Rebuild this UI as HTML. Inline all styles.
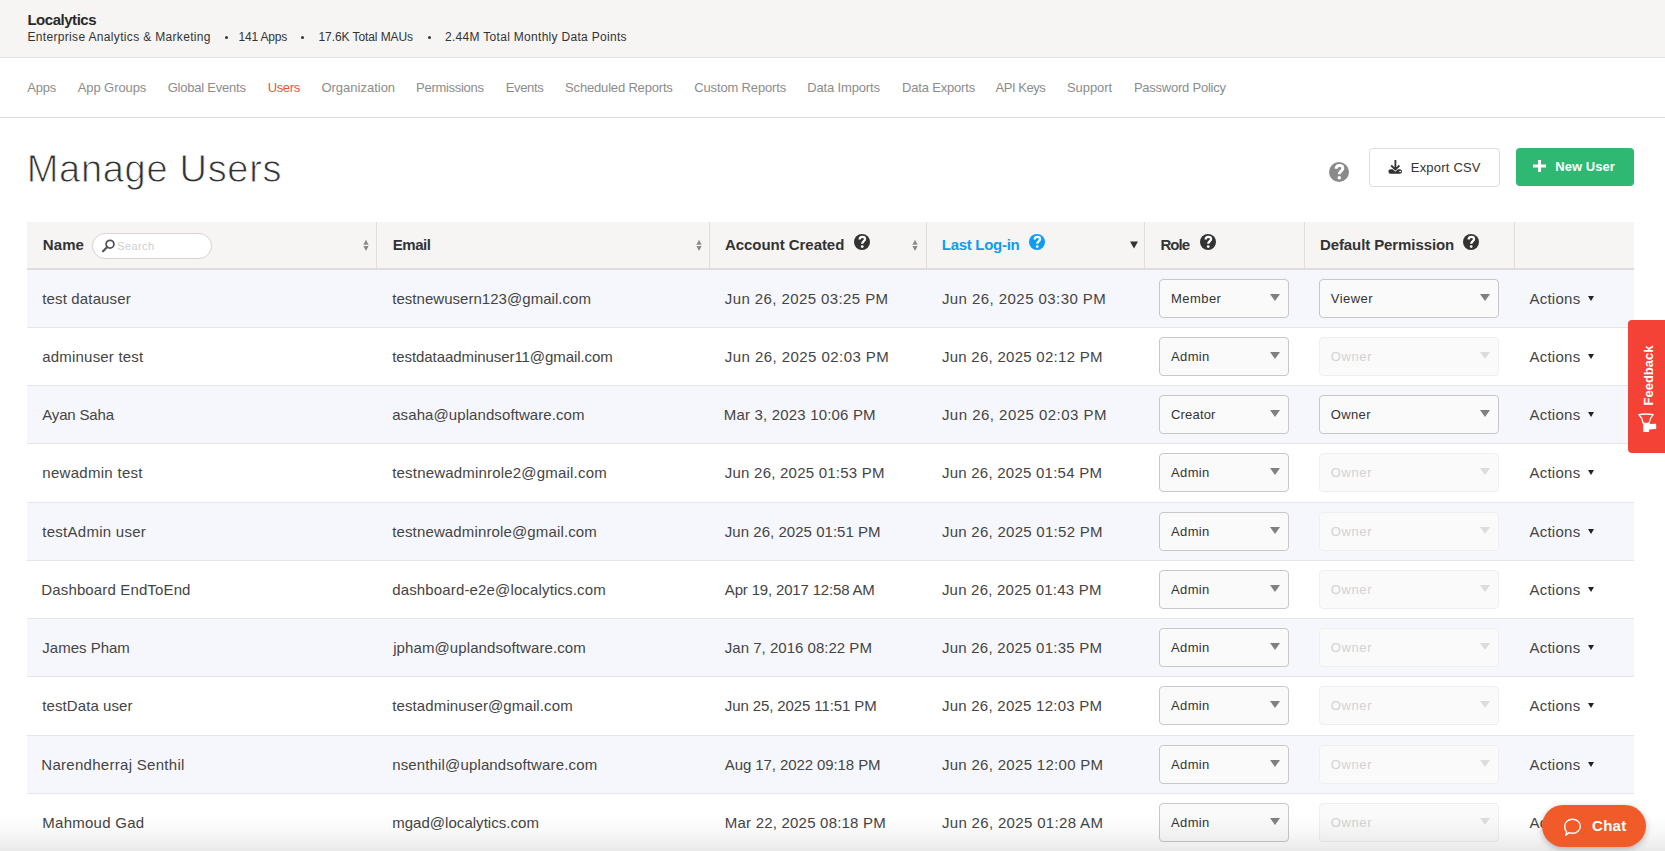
<!DOCTYPE html>
<html><head><meta charset="utf-8">
<style>
*{box-sizing:border-box;margin:0;padding:0}
html,body{width:1665px;height:851px;overflow:hidden;background:#fff;font-family:"Liberation Sans",sans-serif;color:#333}
.abs{position:absolute}
span{position:absolute;white-space:nowrap}
#hdr{position:absolute;left:0;top:0;width:1665px;height:58px;background:#f6f5f4;border-bottom:1px solid #e3e1e0}
.t{font-size:15px;font-weight:bold;color:#2a2a2a}
.s{font-size:12px;color:#333}
.d{position:absolute;top:36.3px;width:3px;height:3px;background:#333;border-radius:1.5px}
#nav{position:absolute;left:0;top:58px;width:1665px;height:60px;border-bottom:1px solid #dcdad9}
.nv{font-size:13px;color:#8c8c8c}
.nv.on{color:#e8543f}
.h1{font-size:38px;color:#333;-webkit-text-stroke:0.9px #fff}
.btn{position:absolute;border-radius:4px}
#exp{left:1369px;top:148px;width:131px;height:39px;border:1px solid #dddddd;background:#fff}
#new{left:1516px;top:148px;width:118px;height:38px;background:#2eb872}
.bt{font-size:13px;color:#333}
.bt.w{color:#fff;font-weight:bold}
#th{position:absolute;left:27px;top:222px;width:1607px;height:48px;background:#f6f5f4;border-bottom:2px solid #e0dcdd}
.vl{position:absolute;top:222px;width:1px;height:46px;background:#e2dedd}
.hb{font-size:15px;font-weight:bold;color:#333}
#srch{position:absolute;left:92px;top:233px;width:120px;height:26px;border:1px solid #d9d3d3;border-radius:13px;background:#fff}
.ph{font-size:11px;color:#cfcfcf}
.row{position:absolute;left:27px;width:1607px;border-bottom:1px solid #e8e5e9;background:#fff}
.row.alt{background:#f6f7fc}
.c{font-size:15px;color:#444}
.sel{position:absolute;height:39px;border:1px solid #c8c8c8;border-radius:4px;background:#fafafa}
.sel:after{content:"";position:absolute;right:8px;top:14px;border-left:5.5px solid transparent;border-right:5.5px solid transparent;border-top:7px solid #808080}
.sel.dis{border-color:#efefef}
.sel.dis:after{border-top-color:#dcdcdc}
.st{font-size:13px;color:#333}
.st.dis{color:#d2d2d2}
.car{position:absolute;width:0;height:0;border-left:3px solid transparent;border-right:3px solid transparent;border-top:5.5px solid #222}
#shade{position:absolute;left:0;top:816px;width:1665px;height:35px;background:linear-gradient(rgba(0,0,0,0) 0%,rgba(0,0,0,0.035) 55%,rgba(0,0,0,0.085) 100%)}
#fb{position:absolute;left:1628px;top:320px;width:40px;height:133px;background:#f44336;border-radius:4px 0 0 4px}
#chat{position:absolute;left:1542px;top:805px;width:104px;height:42px;border-radius:21px;background:#f15a29;box-shadow:0 2px 6px rgba(0,0,0,0.25)}
</style></head><body>
<div id="hdr"></div>
<span id="loc" class="t" style="left:27.4px;top:11px;letter-spacing:-0.467px;">Localytics</span>
<span id="sub0" class="s" style="left:27.4px;top:30px;letter-spacing:0.335px;">Enterprise Analytics &amp; Marketing</span>
<div class="d" style="left:225px"></div>
<span id="sub1" class="s" style="left:238.6px;top:30px;letter-spacing:-0.2px;">141 Apps</span>
<div class="d" style="left:301.1px"></div>
<span id="sub2" class="s" style="left:318.5px;top:30px;letter-spacing:-0.08px;">17.6K Total MAUs</span>
<div class="d" style="left:427.7px"></div>
<span id="sub3" class="s" style="left:445.0px;top:30px;letter-spacing:0.3px;">2.44M Total Monthly Data Points</span>
<div id="nav"></div>
<span id="nav0" class="nv" style="left:27.2px;top:80px;letter-spacing:-0.2px;">Apps</span>
<span id="nav1" class="nv" style="left:77.7px;top:80px;letter-spacing:-0.078px;">App Groups</span>
<span id="nav2" class="nv" style="left:167.7px;top:80px;letter-spacing:-0.225px;">Global Events</span>
<span id="nav3" class="nv on" style="left:267.7px;top:80px;letter-spacing:-0.375px;">Users</span>
<span id="nav4" class="nv" style="left:321.4px;top:80px;letter-spacing:0.0px;">Organization</span>
<span id="nav5" class="nv" style="left:416.1px;top:80px;letter-spacing:-0.3px;">Permissions</span>
<span id="nav6" class="nv" style="left:505.8px;top:80px;letter-spacing:-0.38px;">Events</span>
<span id="nav7" class="nv" style="left:565.1px;top:80px;letter-spacing:-0.175px;">Scheduled Reports</span>
<span id="nav8" class="nv" style="left:694.3px;top:80px;letter-spacing:-0.154px;">Custom Reports</span>
<span id="nav9" class="nv" style="left:807.3px;top:80px;letter-spacing:-0.155px;">Data Imports</span>
<span id="nav10" class="nv" style="left:902.0px;top:80px;letter-spacing:-0.182px;">Data Exports</span>
<span id="nav11" class="nv" style="left:995.6px;top:80px;letter-spacing:-0.471px;">API Keys</span>
<span id="nav12" class="nv" style="left:1067.0px;top:80px;letter-spacing:-0.083px;">Support</span>
<span id="nav13" class="nv" style="left:1133.9px;top:80px;letter-spacing:-0.236px;">Password Policy</span>
<span id="h1" class="h1" style="left:26.75px;top:148px;letter-spacing:0.7px;">Manage Users</span>
<svg class="abs" style="left:1329.0px;top:162.0px" width="20" height="20" viewBox="0 0 16 16"><circle cx="8" cy="8" r="8" fill="#8a8a8a"/><path d="M5.7 5.4C5.7 3.7 6.9 2.8 8.4 2.8 9.9 2.8 11.1 3.7 11.1 5.1 11.1 7 8.2 7.2 8.2 9.7" fill="none" stroke="#fff" stroke-width="2.3"/><circle cx="8.2" cy="12.6" r="1.4" fill="#fff"/></svg>
<div id="exp" class="btn">
  <svg class="abs" style="left:17px;top:9px" width="17" height="17" viewBox="0 0 17 17"><rect x="1.4" y="11.3" width="13.6" height="4.4" rx="2.2" fill="#333"/><path d="M4.2 7.5L8.3 11.6 12.4 7.5" fill="none" stroke="#fff" stroke-width="3"/><path d="M8.4 1.9V11.2M4.2 7.5L8.3 11.6 12.4 7.5" fill="none" stroke="#333" stroke-width="1.8"/><ellipse cx="13.1" cy="13.5" rx="0.9" ry="0.65" fill="#fff"/></svg>
</div>
<span id="bexp" class="bt" style="left:1410.8px;top:160px;letter-spacing:0.2px;">Export CSV</span>
<div id="new" class="btn">
  <svg class="abs" style="left:17px;top:12px" width="13" height="12" viewBox="0 0 13 12"><path d="M5 0h3v4.5h5v3H8V12H5V7.5H0v-3h5z" fill="#fff"/></svg>
</div>
<span id="bnew" class="bt w" style="left:1555.2px;top:159px;letter-spacing:0.071px;">New User</span>
<div id="th"></div>
<div class="vl" style="left:376px"></div>
<div class="vl" style="left:709px"></div>
<div class="vl" style="left:926px"></div>
<div class="vl" style="left:1144px"></div>
<div class="vl" style="left:1304px"></div>
<div class="vl" style="left:1514px"></div>
<span id="hName" class="hb" style="left:42.7px;top:236px;letter-spacing:0.133px;">Name</span>
<div id="srch"><svg class="abs" style="left:8px;top:5px" width="14" height="14" viewBox="0 0 14 14"><circle cx="9" cy="5.2" r="3.9" fill="none" stroke="#555" stroke-width="1.8"/><path d="M6.3 8L2 12.3" stroke="#555" stroke-width="2.2" stroke-linecap="round"/></svg></div>
<span id="ph" class="ph" style="left:117.3px;top:240px;letter-spacing:0.38px;">Search</span>
<svg class="abs" style="left:362.5px;top:239px" width="6" height="13" viewBox="0 0 6 13"><path d="M3 0.7L5.65 5.7H0.35z M0.35 7.1H5.65L3 12z" fill="#8a8a8a"/></svg>
<span id="hEmail" class="hb" style="left:392.7px;top:236px;letter-spacing:-0.425px;">Email</span>
<svg class="abs" style="left:695.5px;top:239px" width="6" height="13" viewBox="0 0 6 13"><path d="M3 0.7L5.65 5.7H0.35z M0.35 7.1H5.65L3 12z" fill="#8a8a8a"/></svg>
<span id="hAcc" class="hb" style="left:725.0px;top:236px;letter-spacing:-0.05px;">Account Created</span>
<svg class="abs" style="left:854.0px;top:234.0px" width="16" height="16" viewBox="0 0 16 16"><circle cx="8" cy="8" r="8" fill="#333333"/><path d="M5.7 5.4C5.7 3.7 6.9 2.8 8.4 2.8 9.9 2.8 11.1 3.7 11.1 5.1 11.1 7 8.2 7.2 8.2 9.7" fill="none" stroke="#fff" stroke-width="2.3"/><circle cx="8.2" cy="12.6" r="1.4" fill="#fff"/></svg>
<svg class="abs" style="left:912px;top:239px" width="6" height="13" viewBox="0 0 6 13"><path d="M3 0.7L5.65 5.7H0.35z M0.35 7.1H5.65L3 12z" fill="#8a8a8a"/></svg>
<span id="hLast" class="hb" style="left:941.8px;top:236px;letter-spacing:-0.29px;color:#0f9cf0">Last Log-in</span>
<svg class="abs" style="left:1029.0px;top:234.0px" width="16" height="16" viewBox="0 0 16 16"><circle cx="8" cy="8" r="8" fill="#0f9cf0"/><path d="M5.7 5.4C5.7 3.7 6.9 2.8 8.4 2.8 9.9 2.8 11.1 3.7 11.1 5.1 11.1 7 8.2 7.2 8.2 9.7" fill="none" stroke="#fff" stroke-width="2.3"/><circle cx="8.2" cy="12.6" r="1.4" fill="#fff"/></svg>
<svg class="abs" style="left:1129.5px;top:241px" width="8" height="8" viewBox="0 0 8 8"><path d="M0 0.5H8L4 7.5z" fill="#333"/></svg>
<span id="hRole" class="hb" style="left:1160.4px;top:236px;letter-spacing:-0.933px;">Role</span>
<svg class="abs" style="left:1200.0px;top:234.0px" width="16" height="16" viewBox="0 0 16 16"><circle cx="8" cy="8" r="8" fill="#333333"/><path d="M5.7 5.4C5.7 3.7 6.9 2.8 8.4 2.8 9.9 2.8 11.1 3.7 11.1 5.1 11.1 7 8.2 7.2 8.2 9.7" fill="none" stroke="#fff" stroke-width="2.3"/><circle cx="8.2" cy="12.6" r="1.4" fill="#fff"/></svg>
<span id="hPerm" class="hb" style="left:1320.0px;top:236px;letter-spacing:-0.1px;">Default Permission</span>
<svg class="abs" style="left:1463.0px;top:234.0px" width="16" height="16" viewBox="0 0 16 16"><circle cx="8" cy="8" r="8" fill="#333333"/><path d="M5.7 5.4C5.7 3.7 6.9 2.8 8.4 2.8 9.9 2.8 11.1 3.7 11.1 5.1 11.1 7 8.2 7.2 8.2 9.7" fill="none" stroke="#fff" stroke-width="2.3"/><circle cx="8.2" cy="12.6" r="1.4" fill="#fff"/></svg>
<div class="row alt" style="top:270px;height:58px"></div>
<span id="n0" class="c" style="left:42.3px;top:290px;letter-spacing:0.142px;">test datauser</span>
<span id="e0" class="c" style="left:392.2px;top:290px;letter-spacing:0.038px;">testnewusern123@gmail.com</span>
<span id="c0" class="c" style="left:724.8px;top:290px;letter-spacing:0.41px;">Jun 26, 2025 03:25 PM</span>
<span id="l0" class="c" style="left:941.9px;top:290px;letter-spacing:0.44px;">Jun 26, 2025 03:30 PM</span>
<div class="sel" style="left:1159px;top:279px;width:130px"></div>
<span id="s_Member_0" class="st" style="left:1171.0px;top:291px;letter-spacing:0.44px;">Member</span>
<div class="sel" style="left:1319px;top:279px;width:180px"></div>
<span id="p_Viewer_0" class="st" style="left:1330.8px;top:291px;letter-spacing:0.44px;">Viewer</span>
<span id="act_0" class="c" style="left:1529.4px;top:290px;letter-spacing:0.267px;">Actions</span>
<i class="car" style="left:1587.5px;top:296px"></i>
<div class="row" style="top:328px;height:58px"></div>
<span id="n1" class="c" style="left:42.3px;top:348px;letter-spacing:0.192px;">adminuser test</span>
<span id="e1" class="c" style="left:392.2px;top:348px;letter-spacing:-0.071px;">testdataadminuser11@gmail.com</span>
<span id="c1" class="c" style="left:724.8px;top:348px;letter-spacing:0.445px;">Jun 26, 2025 02:03 PM</span>
<span id="l1" class="c" style="left:941.9px;top:348px;letter-spacing:0.275px;">Jun 26, 2025 02:12 PM</span>
<div class="sel" style="left:1159px;top:337px;width:130px"></div>
<span id="s_Admin_1" class="st" style="left:1171.0px;top:349px;letter-spacing:0.375px;">Admin</span>
<div class="sel dis" style="left:1319px;top:337px;width:180px"></div>
<span id="p_Ownerd_1" class="st dis" style="left:1330.8px;top:349px;letter-spacing:0.6px;">Owner</span>
<span id="act_1" class="c" style="left:1529.4px;top:348px;letter-spacing:0.267px;">Actions</span>
<i class="car" style="left:1587.5px;top:354px"></i>
<div class="row alt" style="top:386px;height:58px"></div>
<span id="n2" class="c" style="left:42.3px;top:406px;letter-spacing:-0.175px;">Ayan Saha</span>
<span id="e2" class="c" style="left:392.2px;top:406px;letter-spacing:0.087px;">asaha@uplandsoftware.com</span>
<span id="c2" class="c" style="left:723.8px;top:406px;letter-spacing:0.179px;">Mar 3, 2023 10:06 PM</span>
<span id="l2" class="c" style="left:941.9px;top:406px;letter-spacing:0.475px;">Jun 26, 2025 02:03 PM</span>
<div class="sel" style="left:1159px;top:395px;width:130px"></div>
<span id="s_Creator_2" class="st" style="left:1171.0px;top:407px;letter-spacing:0.183px;">Creator</span>
<div class="sel" style="left:1319px;top:395px;width:180px"></div>
<span id="p_Owner_2" class="st" style="left:1330.8px;top:407px;letter-spacing:0.35px;">Owner</span>
<span id="act_2" class="c" style="left:1529.4px;top:406px;letter-spacing:0.267px;">Actions</span>
<i class="car" style="left:1587.5px;top:412px"></i>
<div class="row" style="top:444px;height:59px"></div>
<span id="n3" class="c" style="left:42.3px;top:464px;letter-spacing:0.292px;">newadmin test</span>
<span id="e3" class="c" style="left:392.2px;top:464px;letter-spacing:0.192px;">testnewadminrole2@gmail.com</span>
<span id="c3" class="c" style="left:724.8px;top:464px;letter-spacing:0.23px;">Jun 26, 2025 01:53 PM</span>
<span id="l3" class="c" style="left:941.9px;top:464px;letter-spacing:0.245px;">Jun 26, 2025 01:54 PM</span>
<div class="sel" style="left:1159px;top:453px;width:130px"></div>
<span id="s_Admin_3" class="st" style="left:1171.0px;top:465px;letter-spacing:0.375px;">Admin</span>
<div class="sel dis" style="left:1319px;top:453px;width:180px"></div>
<span id="p_Ownerd_3" class="st dis" style="left:1330.8px;top:465px;letter-spacing:0.6px;">Owner</span>
<span id="act_3" class="c" style="left:1529.4px;top:464px;letter-spacing:0.267px;">Actions</span>
<i class="car" style="left:1587.5px;top:470px"></i>
<div class="row alt" style="top:503px;height:58px"></div>
<span id="n4" class="c" style="left:42.3px;top:523px;letter-spacing:0.269px;">testAdmin user</span>
<span id="e4" class="c" style="left:392.2px;top:523px;letter-spacing:0.14px;">testnewadminrole@gmail.com</span>
<span id="c4" class="c" style="left:724.8px;top:523px;letter-spacing:0.035px;">Jun 26, 2025 01:51 PM</span>
<span id="l4" class="c" style="left:941.9px;top:523px;letter-spacing:0.275px;">Jun 26, 2025 01:52 PM</span>
<div class="sel" style="left:1159px;top:512px;width:130px"></div>
<span id="s_Admin_4" class="st" style="left:1171.0px;top:524px;letter-spacing:0.375px;">Admin</span>
<div class="sel dis" style="left:1319px;top:512px;width:180px"></div>
<span id="p_Ownerd_4" class="st dis" style="left:1330.8px;top:524px;letter-spacing:0.6px;">Owner</span>
<span id="act_4" class="c" style="left:1529.4px;top:523px;letter-spacing:0.267px;">Actions</span>
<i class="car" style="left:1587.5px;top:529px"></i>
<div class="row" style="top:561px;height:58px"></div>
<span id="n5" class="c" style="left:41.3px;top:581px;letter-spacing:0.141px;">Dashboard EndToEnd</span>
<span id="e5" class="c" style="left:392.2px;top:581px;letter-spacing:0.148px;">dashboard-e2e@localytics.com</span>
<span id="c5" class="c" style="left:724.8px;top:581px;letter-spacing:-0.17px;">Apr 19, 2017 12:58 AM</span>
<span id="l5" class="c" style="left:941.9px;top:581px;letter-spacing:0.22px;">Jun 26, 2025 01:43 PM</span>
<div class="sel" style="left:1159px;top:570px;width:130px"></div>
<span id="s_Admin_5" class="st" style="left:1171.0px;top:582px;letter-spacing:0.375px;">Admin</span>
<div class="sel dis" style="left:1319px;top:570px;width:180px"></div>
<span id="p_Ownerd_5" class="st dis" style="left:1330.8px;top:582px;letter-spacing:0.6px;">Owner</span>
<span id="act_5" class="c" style="left:1529.4px;top:581px;letter-spacing:0.267px;">Actions</span>
<i class="car" style="left:1587.5px;top:587px"></i>
<div class="row alt" style="top:619px;height:58px"></div>
<span id="n6" class="c" style="left:42.3px;top:639px;letter-spacing:0.0px;">James Pham</span>
<span id="e6" class="c" style="left:393.2px;top:639px;letter-spacing:0.096px;">jpham@uplandsoftware.com</span>
<span id="c6" class="c" style="left:724.8px;top:639px;letter-spacing:0.016px;">Jan 7, 2016 08:22 PM</span>
<span id="l6" class="c" style="left:941.9px;top:639px;letter-spacing:0.255px;">Jun 26, 2025 01:35 PM</span>
<div class="sel" style="left:1159px;top:628px;width:130px"></div>
<span id="s_Admin_6" class="st" style="left:1171.0px;top:640px;letter-spacing:0.375px;">Admin</span>
<div class="sel dis" style="left:1319px;top:628px;width:180px"></div>
<span id="p_Ownerd_6" class="st dis" style="left:1330.8px;top:640px;letter-spacing:0.6px;">Owner</span>
<span id="act_6" class="c" style="left:1529.4px;top:639px;letter-spacing:0.267px;">Actions</span>
<i class="car" style="left:1587.5px;top:645px"></i>
<div class="row" style="top:677px;height:59px"></div>
<span id="n7" class="c" style="left:42.3px;top:697px;letter-spacing:0.083px;">testData user</span>
<span id="e7" class="c" style="left:392.2px;top:697px;letter-spacing:0.123px;">testadminuser@gmail.com</span>
<span id="c7" class="c" style="left:724.8px;top:697px;letter-spacing:-0.105px;">Jun 25, 2025 11:51 PM</span>
<span id="l7" class="c" style="left:941.9px;top:697px;letter-spacing:0.255px;">Jun 26, 2025 12:03 PM</span>
<div class="sel" style="left:1159px;top:686px;width:130px"></div>
<span id="s_Admin_7" class="st" style="left:1171.0px;top:698px;letter-spacing:0.375px;">Admin</span>
<div class="sel dis" style="left:1319px;top:686px;width:180px"></div>
<span id="p_Ownerd_7" class="st dis" style="left:1330.8px;top:698px;letter-spacing:0.6px;">Owner</span>
<span id="act_7" class="c" style="left:1529.4px;top:697px;letter-spacing:0.267px;">Actions</span>
<i class="car" style="left:1587.5px;top:703px"></i>
<div class="row alt" style="top:736px;height:58px"></div>
<span id="n8" class="c" style="left:41.3px;top:756px;letter-spacing:0.289px;">Narendherraj Senthil</span>
<span id="e8" class="c" style="left:392.2px;top:756px;letter-spacing:0.146px;">nsenthil@uplandsoftware.com</span>
<span id="c8" class="c" style="left:724.8px;top:756px;letter-spacing:-0.09px;">Aug 17, 2022 09:18 PM</span>
<span id="l8" class="c" style="left:941.9px;top:756px;letter-spacing:0.305px;">Jun 26, 2025 12:00 PM</span>
<div class="sel" style="left:1159px;top:745px;width:130px"></div>
<span id="s_Admin_8" class="st" style="left:1171.0px;top:757px;letter-spacing:0.375px;">Admin</span>
<div class="sel dis" style="left:1319px;top:745px;width:180px"></div>
<span id="p_Ownerd_8" class="st dis" style="left:1330.8px;top:757px;letter-spacing:0.6px;">Owner</span>
<span id="act_8" class="c" style="left:1529.4px;top:756px;letter-spacing:0.267px;">Actions</span>
<i class="car" style="left:1587.5px;top:762px"></i>
<div class="row" style="top:794px;height:59px"></div>
<span id="n9" class="c" style="left:42.3px;top:814px;letter-spacing:0.26px;">Mahmoud Gad</span>
<span id="e9" class="c" style="left:392.2px;top:814px;letter-spacing:0.033px;">mgad@localytics.com</span>
<span id="c9" class="c" style="left:724.8px;top:814px;letter-spacing:0.21px;">Mar 22, 2025 08:18 PM</span>
<span id="l9" class="c" style="left:941.9px;top:814px;letter-spacing:0.335px;">Jun 26, 2025 01:28 AM</span>
<div class="sel" style="left:1159px;top:803px;width:130px"></div>
<span id="s_Admin_9" class="st" style="left:1171.0px;top:815px;letter-spacing:0.375px;">Admin</span>
<div class="sel dis" style="left:1319px;top:803px;width:180px"></div>
<span id="p_Ownerd_9" class="st dis" style="left:1330.8px;top:815px;letter-spacing:0.6px;">Owner</span>
<span id="act_9" class="c" style="left:1529.4px;top:814px;letter-spacing:0.267px;">Actions</span>
<i class="car" style="left:1587.5px;top:820px"></i>
<div id="shade"></div>
<div id="fb">
  <span style="left:-16.5px;top:47.5px;width:72px;transform:rotate(-90deg);color:#fff;font-size:13px;font-weight:bold;text-align:center">Feedback</span>
  <svg class="abs" style="left:8px;top:90px" width="24" height="24" viewBox="0 0 24 24"><path d="M2.9 4.6Q10 3.3 17.1 4.6Q13.7 8.3 13 13.4H7.3Q6.5 8.3 2.9 4.6Z" fill="none" stroke="#fff" stroke-width="1.4" stroke-linejoin="round"/><path d="M7.2 13.3H13.1V14.1L19.4 13.7Q20.2 13.7 20.2 14.5V18.2Q20.2 19 19.4 19.1L13.1 19.4V21.2Q13.1 22 12.3 22H8Q7.2 22 7.2 21.2Z" fill="#fff"/></svg>
</div>
<div id="chat">
  <svg class="abs" style="left:21px;top:12.5px" width="19" height="19" viewBox="0 0 19 19"><path d="M9.5 1.2c4.3 0 7.8 3.1 7.8 7 0 3.9-3.5 7-7.8 7-1.2 0-2.3-.2-3.3-.6L2.8 17.3l.9-3.3C2.3 12.7 1.7 10.6 1.7 8.2c0-3.9 3.5-7 7.8-7z" fill="none" stroke="#fff" stroke-width="1.4" stroke-linejoin="round"/></svg>
  <span id="chatt" style="left:50px;top:12px;color:#fff;font-size:15px;font-weight:bold;letter-spacing:0.3px">Chat</span>
</div>
</body></html>
